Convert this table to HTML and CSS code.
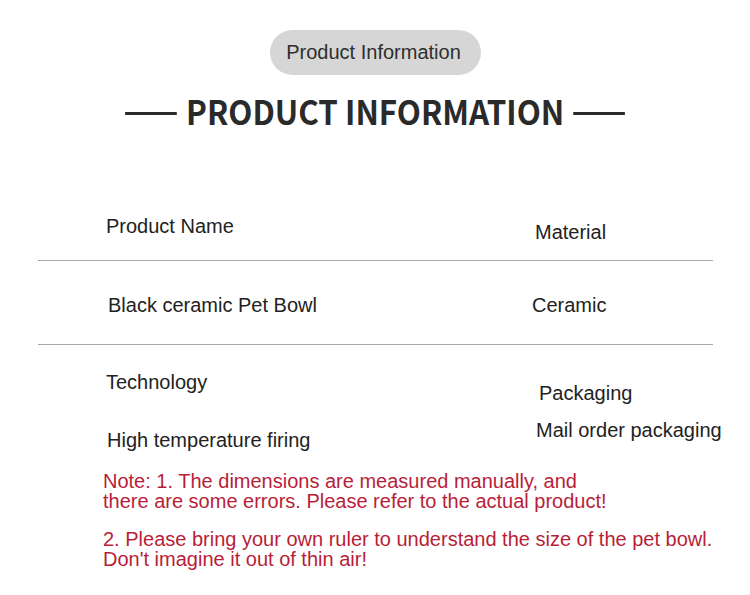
FILE: index.html
```html
<!DOCTYPE html>
<html lang="en">
<head>
<meta charset="utf-8">
<title>Product Information</title>
<link rel="stylesheet" href="styles.css">
</head>
<body>
<main class="page">
  <header class="head">
    <div class="pill">Product Information</div>
    <h1 class="title"><span class="dash"></span><span class="title-text">PRODUCT INFORMATION</span><span class="dash"></span></h1>
  </header>
  <section class="spec">
    <div class="row row-1">
      <div class="cell c-name">Product Name</div>
      <div class="cell c-mat">Material</div>
    </div>
    <div class="row row-2">
      <div class="cell c-bowl">Black ceramic Pet Bowl</div>
      <div class="cell c-cer">Ceramic</div>
    </div>
    <div class="row row-3">
      <div class="col-left">
        <div class="cell c-tech">Technology</div>
        <div class="cell c-fire">High temperature firing</div>
      </div>
      <div class="col-right">
        <div class="cell c-pack">Packaging</div>
        <div class="cell c-mail">Mail order packaging</div>
      </div>
    </div>
  </section>
  <section class="notes">
    <p class="note">Note: 1. The dimensions are measured manually, and<br>there are some errors. Please refer to the actual product!</p>
    <p class="note">2. Please bring your own ruler to understand the size of the pet bowl.<br>Don't imagine it out of thin air!</p>
  </section>
</main>
</body>
</html>
```
FILE: styles.css
```css
* { box-sizing: border-box; }
html, body { margin: 0; padding: 0; background: #ffffff; }
body { font-family: "Liberation Sans", Arial, sans-serif; color: #222222; }
.page { width: 750px; height: 595px; overflow: hidden; }

.head { display: flex; flex-direction: column; align-items: center; padding-top: 30px; }
.pill {
  width: 211px; height: 45px; border-radius: 23px;
  background: #d6d6d6; color: #2e2e2e;
  font-size: 20px; line-height: 45px; text-align: center;
  padding-right: 3px;
}
.title {
  margin: 14px 0 0 0; display: flex; align-items: center; gap: 10px;
  font-family: "Noto Sans CJK SC", "Noto Sans", sans-serif; font-weight: 700;
  font-size: 34px; line-height: 44px; color: #2a2a2a; letter-spacing: 0;
  transform: scaleX(0.922); transform-origin: 50% 50%;
}
.dash { display: block; width: 56px; height: 3px; background: #2a2a2a; margin-top: 4px; }

.spec { margin: 0 37px 0 38px; padding-top: 67px; }
.row { display: grid; grid-template-columns: 426px 1fr; border-bottom: 1px solid #a8a8a8; font-size: 20px; line-height: 23px; }
.row-1 { height: 61px; }
.row-2 { height: 84px; align-items: center; padding-top: 6px; }
.row-3 { border-bottom: none; }
.cell { white-space: nowrap; }
.c-name { padding-left: 68px; padding-top: 15px; }
.c-mat { padding-left: 71px; padding-top: 21px; }
.c-bowl { padding-left: 70px; }
.c-cer { padding-left: 68px; }
.c-tech { padding-left: 68px; padding-top: 26px; }
.c-fire { padding-left: 69px; padding-top: 35px; }
.c-pack { padding-left: 75px; padding-top: 37px; }
.c-mail { padding-left: 72px; padding-top: 14px; }

.notes { padding-left: 103px; padding-top: 19px; color: #b81e38; font-size: 20px; line-height: 20px; }
.note { margin: 0 0 18px 0; white-space: nowrap; }
```
